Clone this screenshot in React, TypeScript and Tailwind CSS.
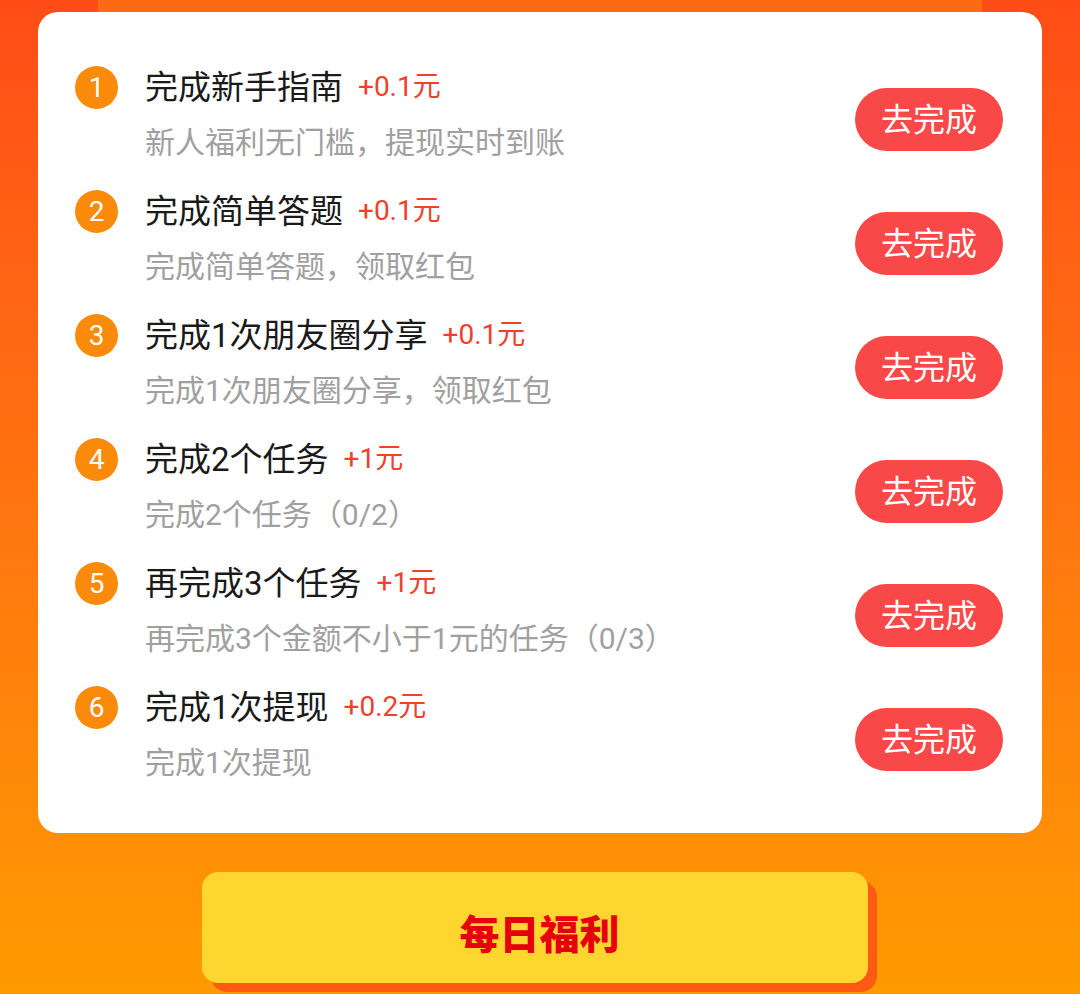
const tasks = [
  { title: "完成新手指南", reward: "+0.1元", desc: "新人福利无门槛，提现实时到账" },
  { title: "完成简单答题", reward: "+0.1元", desc: "完成简单答题，领取红包" },
  { title: "完成1次朋友圈分享", reward: "+0.1元", desc: "完成1次朋友圈分享，领取红包" },
  { title: "完成2个任务", reward: "+1元", desc: "完成2个任务（0/2）" },
  { title: "再完成3个任务", reward: "+1元", desc: "再完成3个金额不小于1元的任务（0/3）" },
  { title: "完成1次提现", reward: "+0.2元", desc: "完成1次提现" },
];

const TaskRow = ({ index, title, reward, desc }) => {
  return (
    <div className="flex h-[124px] items-start">
      <div className="mt-[1px] flex h-[43px] w-[43px] shrink-0 items-center justify-center rounded-full bg-[#fa8a0a] text-[28px] leading-none text-white">
        {index}
      </div>
      <div className="ml-[27px] flex-1">
        <div className="flex h-[44px] items-center">
          <span className="text-[33px] leading-none text-[#1a1a1a]">{title}</span>
          <span className="ml-[15px] text-[28px] leading-none text-[#f0402c]">{reward}</span>
        </div>
        <div className="mt-[14px] flex h-[40px] items-center text-[30px] leading-none text-[#a0a0a0]">
          {desc}
        </div>
      </div>
      <button className="mt-[23px] flex h-[63px] w-[148px] shrink-0 items-center justify-center rounded-full bg-[#f84848] text-[32px] leading-none text-white">
        去完成
      </button>
    </div>
  );
}

export default function App() {
  return (
    <div
      className="flex h-[994px] w-[1080px] flex-col items-center overflow-hidden bg-gradient-to-b from-[#ff4c17] via-[#ff7410] to-[#ff9a00]"
      style={{ fontFamily: 'Roboto, "Noto Sans CJK SC", "Noto Sans", sans-serif' }}
    >
      <div className="h-[12px] w-[884px] bg-[#fa6b14]" />
      <div className="w-[1004px] rounded-[20px] bg-white pb-[24px] pl-[37px] pr-[39px] pt-[53px]">
        {tasks.map((t, i) => (
          <TaskRow key={i} index={i + 1} {...t} />
        ))}
      </div>
      <button className="mt-[39px] ml-[-10px] flex h-[111px] w-[666px] items-center justify-center rounded-[16px] bg-[#ffd52f] pl-[9px] pt-[16px] text-[40px] font-black leading-none text-[#e6000f] shadow-[9px_9px_0_#ff5a14]">
        每日福利
      </button>
    </div>
  );
}
